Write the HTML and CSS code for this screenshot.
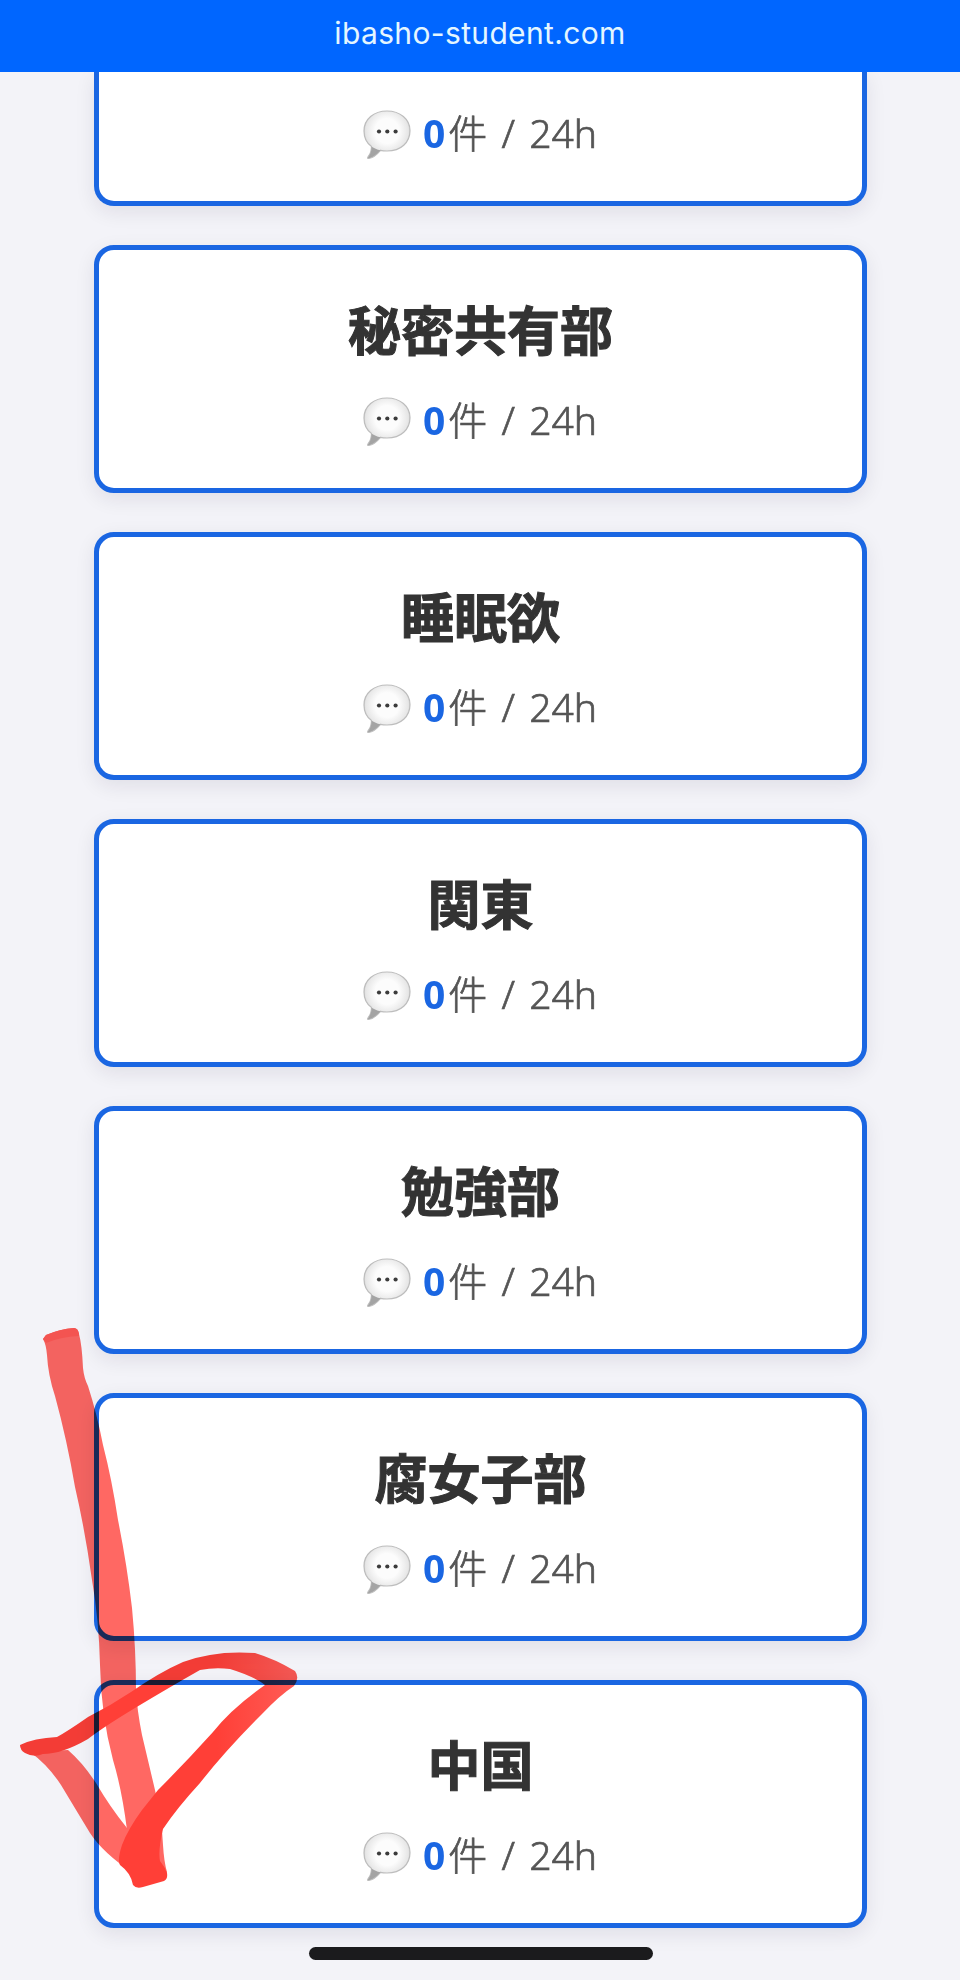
FILE: index.html
```
<!DOCTYPE html>
<html lang="ja">
  <head>
    <meta charset="UTF-8" />
    <meta name="viewport" content="width=device-width, initial-scale=1.0" />
    <title>ibasho-student.com</title>
    <link rel="stylesheet" href="styles.css">
  </head>
  <body>
    <svg class="defs" width="0" height="0">
      <defs>
        <radialGradient id="bubble-fill" cx="0.5" cy="0.42" r="0.58">
          <stop offset="0.45" stop-color="#fcfcfc" />
          <stop offset="0.8" stop-color="#e6e6e6" />
          <stop offset="1" stop-color="#a8a8a8" />
        </radialGradient>
        <symbol id="bubble" viewBox="0 0 48 50">
          <path d="M24 1C37 1 47 9 47 20.500C47 32.500 38 41 24 41C21 41 19 40.700 17.500 40.300C14 44.500 9.500 48 5.500 48.500C4.500 48.500 4.500 47.700 5 47C7.500 44 8.500 41 8.500 36.500C3.500 33 1 27.500 1 21C1 9 11 1 24 1Z" fill="url(#bubble-fill)" stroke="#bdbdbd" stroke-width="1.200" />
          <path d="M5 48C9.500 47.500 14 44 17.500 40.300C14 39.500 11 38.200 8.700 36.700C8.500 41.500 7.300 44.500 5 48Z" fill="#a4a4a4" />
          <circle cx="16" cy="21.500" r="2.100" fill="#3c3c3c" />
          <circle cx="24.300" cy="21.500" r="2.100" fill="#3c3c3c" />
          <circle cx="32.600" cy="21.500" r="2.100" fill="#3c3c3c" />
        </symbol>
      </defs>
    </svg>

    <header class="site-bar">ibasho-student.com</header>

    <main class="room-list">
      <div class="room room-cut">
        <p class="count"><svg class="icon"><use href="#bubble" /></svg><b>0</b>件 / 24h</p>
      </div>
      <div class="room">
        <h2>秘密共有部</h2>
        <p class="count"><svg class="icon"><use href="#bubble" /></svg><b>0</b>件 / 24h</p>
      </div>
      <div class="room">
        <h2>睡眠欲</h2>
        <p class="count"><svg class="icon"><use href="#bubble" /></svg><b>0</b>件 / 24h</p>
      </div>
      <div class="room">
        <h2>関東</h2>
        <p class="count"><svg class="icon"><use href="#bubble" /></svg><b>0</b>件 / 24h</p>
      </div>
      <div class="room">
        <h2>勉強部</h2>
        <p class="count"><svg class="icon"><use href="#bubble" /></svg><b>0</b>件 / 24h</p>
      </div>
      <div class="room">
        <h2>腐女子部</h2>
        <p class="count"><svg class="icon"><use href="#bubble" /></svg><b>0</b>件 / 24h</p>
      </div>
      <div class="room">
        <h2>中国</h2>
        <p class="count"><svg class="icon"><use href="#bubble" /></svg><b>0</b>件 / 24h</p>
      </div>
    </main>

    <!-- marker arrow drawn over the list -->
    <svg class="marker" viewBox="0 1300 320 620">
      <defs>
        <linearGradient id="ink" gradientUnits="userSpaceOnUse" x1="215" y1="1670" x2="290" y2="1668">
          <stop offset="0" stop-color="#ff3f37" />
          <stop offset="1" stop-color="#ff5a54" />
        </linearGradient>
      </defs>
      <!-- shaft -->
      <path fill="#ff6863" d="M46 1335Q60 1329 74 1328Q78 1328 79 1334Q82 1345 83 1368Q84 1378 88 1386Q97 1414 103 1445Q112 1480 118 1520Q127 1565 132 1608Q136 1650 136 1690Q137 1710 142 1735L155 1790Q162 1820 163 1845Q164 1862 167 1872L165 1879L135 1885L127 1830Q122 1790 113 1760Q101 1715 100 1665Q99 1620 92 1580Q85 1530 75 1487Q67 1440 55 1396Q48 1375 47 1355Q46 1344 43 1339Z" />
      <path fill="#ff5853" d="M46 1335Q60 1329 74 1328Q78 1328 79 1334L79 1336Q60 1337 46 1343L43 1339Z" />
      <!-- left leg -->
      <path fill="#ff6863" d="M30 1752Q48 1765 61 1785Q76 1810 90 1833Q103 1853 133 1873L140 1840L127 1828Q110 1807 96 1783Q83 1763 68 1750Z" />
      <!-- head outline -->
      <path fill="url(#ink)" fill-rule="evenodd" d="M20 1745Q34 1738 57 1737Q68 1731 88 1717Q110 1706 131 1692Q160 1672 183 1662Q215 1650 255 1653Q275 1659 295 1671Q300 1678 294 1686Q280 1695 262 1714Q225 1751 200 1783Q177 1808 163 1829Q158 1850 160 1861Q165 1867 167 1873Q168 1879 164 1881L143 1887Q136 1889 133 1885Q131 1873 120 1865Q117 1860 122 1845Q128 1829 142 1810L158 1790Q185 1763 213 1732Q232 1708 265 1685Q253 1676 230 1669Q215 1667 200 1670Q170 1687 135 1708Q102 1728 88 1739Q62 1754 43 1754Q34 1758 25 1753Q20 1750 20 1745Z" />
    </svg>

    <div class="home-bar"></div>
  </body>
</html>
```
FILE: styles.css
```
* {
  box-sizing: border-box;
}
body {
  margin: 0;
  height: 1980px;
  position: relative;
  overflow: hidden;
  background-color: #f3f3f8;
  color: #555;
  font-family: "Noto Sans", "Noto Sans CJK JP", sans-serif;
}
.defs {
  position: absolute;
}
.site-bar {
  position: relative;
  z-index: 1;
  height: 71.5px;
  padding-top: 13px;
  background-color: #0066ff;
  color: #e4f6ff;
  font-family: Inter, sans-serif;
  font-size: 30px;
  line-height: 40px;
  letter-spacing: 0.35px;
  text-align: center;
}
.room-list {
  display: flex;
  flex-direction: column;
  gap: 38.6px;
  width: 773px;
  margin: 0 auto;
}
.room {
  height: 248.4px;
  padding-top: 43px;
  background-color: #fff;
  border: 5px solid #1a66e2;
  border-radius: 20px;
  box-shadow: 0 6px 20px rgba(30, 20, 50, 0.09);
  text-align: center;
}
.room-cut {
  height: 134.9px;
  padding-top: 33px;
  border-top: 0;
  border-radius: 0 0 20px 20px;
}
.room h2 {
  margin: 0 0 29px;
  padding-left: 1px;
  color: #333;
  font-family: "Noto Sans CJK JP", sans-serif;
  font-size: 53px;
  font-weight: 700;
  line-height: 70px;
  -webkit-text-stroke: 1px #333;
}
.count {
  display: flex;
  justify-content: center;
  align-items: center;
  margin: 0;
  font-size: 39px;
  font-weight: 300;
  line-height: 56px;
  word-spacing: 4px;
  white-space: pre;
  -webkit-text-stroke: 0.7px #555;
}
.count b {
  color: #1a66e2;
  font-weight: 700;
  letter-spacing: 3px;
  -webkit-text-stroke: 0;
}
.icon {
  width: 48px;
  height: 50px;
  margin: 4px 12px 0 0;
}
.marker {
  position: absolute;
  left: 0;
  top: 1300px;
  width: 320px;
  height: 620px;
  mix-blend-mode: multiply;
}
.home-bar {
  position: absolute;
  left: 309px;
  bottom: 20.5px;
  width: 344px;
  height: 13px;
  border-radius: 7px;
  background-color: #1b1b1d;
}
```
